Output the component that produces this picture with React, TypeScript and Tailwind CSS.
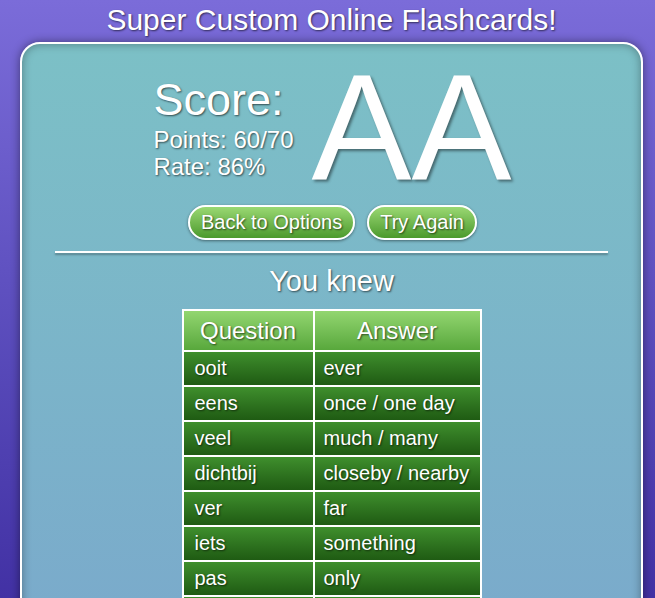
import React from "react";

const shadow = "[text-shadow:1px_1px_2px_rgba(0,0,0,0.6)]";

const rows: [string, string][] = [
  ["ooit", "ever"],
  ["eens", "once / one day"],
  ["veel", "much / many"],
  ["dichtbij", "closeby / nearby"],
  ["ver", "far"],
  ["iets", "something"],
  ["pas", "only"],
  ["goed", "good"],
  ["nooit", "never"],
];

const Pill: React.FC<{ label: string }> = ({ label }) => (
  <button className="whitespace-nowrap rounded-full border-2 border-white bg-gradient-to-b from-[#9ad872] to-[#4b9a2c] px-[11px] py-[4px] text-[20px] leading-[23px] text-white shadow-[0_1px_3px_rgba(0,0,0,0.45)] [text-shadow:1px_1px_2px_rgba(0,0,0,0.6)]">
    {label}
  </button>
);

export default function App() {
  return (
    <div
      className="h-screen overflow-hidden bg-gradient-to-b from-[#7b6cd9] to-[#4231a4] text-white"
      style={{ fontFamily: '"Liberation Sans", Arial, sans-serif' }}
    >
      <div className="ml-[20px] w-[623px]">
        {/* Page title */}
        <h1 className={`h-[42px] whitespace-nowrap text-center text-[30px] leading-[40px] ${shadow}`}>
          Super Custom Online Flashcards!
        </h1>

        {/* Results panel */}
        <div className="rounded-[20px] border-2 border-white bg-gradient-to-b from-[#7cc0c6] to-[#7aa7cc] pb-10 pt-[8px] shadow-[0_0_10px_rgba(0,0,0,0.45),inset_0_0_10px_rgba(0,0,0,0.35)]">
          <div className="flex items-start justify-center gap-[18px] pl-[2px]">
            <div className="mt-[24px] whitespace-nowrap">
              <div className={`text-[45px] leading-[48px] ${shadow}`}>Score:</div>
              <div className={`mt-[2px] text-[24px] leading-[27px] ${shadow}`}>Points: 60/70</div>
              <div className={`text-[24px] leading-[28px] ${shadow}`}>Rate: 86%</div>
            </div>
            <div className="text-[150px] leading-[150px] [text-shadow:2px_2px_3px_rgba(0,0,0,0.45)]">
              AA
            </div>
          </div>

          <div className="mt-[3px] flex justify-center gap-[12px] pl-[2px]">
            <Pill label="Back to Options" />
            <Pill label="Try Again" />
          </div>

          <div className="mx-[33px] mt-[11px] h-[2px] bg-white shadow-[0_2px_2px_rgba(0,0,0,0.3)]" />

          <h2 className={`mt-[11px] text-center text-[29px] leading-[34px] ${shadow}`}>You knew</h2>

          {/* Known words table */}
          <div className="mx-auto mt-[11px] grid w-[300px] grid-cols-[129px_165px] gap-[2px] bg-white p-[2px]">
            <div className={`h-[39px] bg-gradient-to-b from-[#93d670] to-[#58a83c] text-center text-[24px] leading-[39px] ${shadow}`}>
              Question
            </div>
            <div className={`h-[39px] bg-gradient-to-b from-[#93d670] to-[#58a83c] text-center text-[24px] leading-[39px] ${shadow}`}>
              Answer
            </div>
            {rows.map(([q, a]) => (
              <React.Fragment key={q}>
                <div className={`h-[33px] bg-gradient-to-b from-[#3f8f2d] to-[#1f5b13] pl-[11px] text-[20px] leading-[33px] ${shadow}`}>
                  {q}
                </div>
                <div className={`h-[33px] bg-gradient-to-b from-[#3f8f2d] to-[#1f5b13] pl-[9px] text-[20px] leading-[33px] ${shadow}`}>
                  {a}
                </div>
              </React.Fragment>
            ))}
          </div>
        </div>
      </div>
    </div>
  );
}
